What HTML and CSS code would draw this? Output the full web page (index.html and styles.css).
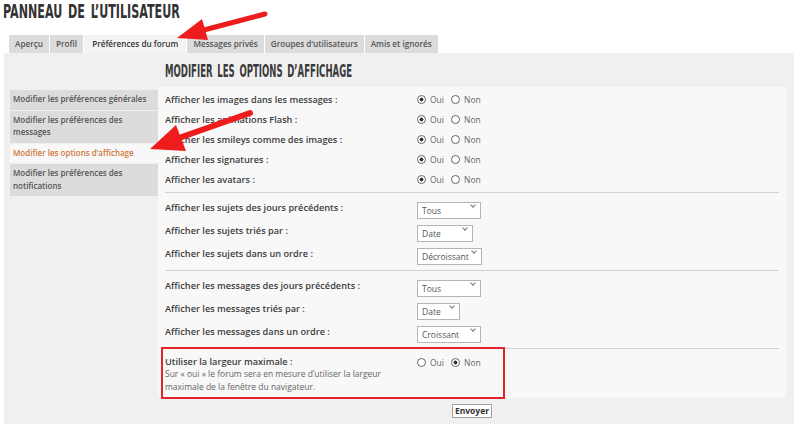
FILE: index.html
```html
<!DOCTYPE html>
<html lang="fr">
<head>
    <meta charset="utf-8">
    <title>Panneau de l'utilisateur</title>
    <link rel="stylesheet" href="styles.css">
</head>
<body>
    <h1 class="page-title"><span>PANNEAU DE L’UTILISATEUR</span></h1>

    <ul class="tabs">
        <li class="tab">Aperçu</li>
        <li class="tab">Profil</li>
        <li class="tab active">Préférences du forum</li>
        <li class="tab">Messages privés</li>
        <li class="tab">Groupes d’utilisateurs</li>
        <li class="tab">Amis et ignorés</li>
    </ul>

    <div class="panel">
        <h2 class="panel-title"><span>MODIFIER LES OPTIONS D’AFFICHAGE</span></h2>

        <ul class="side-menu">
            <li>Modifier les préférences générales</li>
            <li>Modifier les préférences des messages</li>
            <li class="current">Modifier les options d’affichage</li>
            <li>Modifier les préférences des notifications</li>
        </ul>

        <form class="content">
            <div class="group group-radios">
                <div class="row">
                    <label>Afficher les images dans les messages :</label>
                    <span class="choices">
                        <input type="radio" name="images" checked><span>Oui</span>
                        <input type="radio" name="images"><span>Non</span>
                    </span>
                </div>
                <div class="row">
                    <label>Afficher les animations Flash :</label>
                    <span class="choices">
                        <input type="radio" name="flash" checked><span>Oui</span>
                        <input type="radio" name="flash"><span>Non</span>
                    </span>
                </div>
                <div class="row">
                    <label>Afficher les smileys comme des images :</label>
                    <span class="choices">
                        <input type="radio" name="smileys" checked><span>Oui</span>
                        <input type="radio" name="smileys"><span>Non</span>
                    </span>
                </div>
                <div class="row">
                    <label>Afficher les signatures :</label>
                    <span class="choices">
                        <input type="radio" name="sigs" checked><span>Oui</span>
                        <input type="radio" name="sigs"><span>Non</span>
                    </span>
                </div>
                <div class="row">
                    <label>Afficher les avatars :</label>
                    <span class="choices">
                        <input type="radio" name="avatars" checked><span>Oui</span>
                        <input type="radio" name="avatars"><span>Non</span>
                    </span>
                </div>
            </div>

            <div class="group group-selects">
                <div class="row">
                    <label>Afficher les sujets des jours précédents :</label>
                    <span class="select w-wide"><select><option>Tous</option></select></span>
                </div>
                <div class="row">
                    <label>Afficher les sujets triés par :</label>
                    <span class="select w-mid"><select><option>Date</option></select></span>
                </div>
                <div class="row">
                    <label>Afficher les sujets dans un ordre :</label>
                    <span class="select w-full"><select><option>Décroissant</option></select></span>
                </div>
            </div>

            <div class="group group-selects">
                <div class="row">
                    <label>Afficher les messages des jours précédents :</label>
                    <span class="select w-wide"><select><option>Tous</option></select></span>
                </div>
                <div class="row">
                    <label>Afficher les messages triés par :</label>
                    <span class="select w-short"><select><option>Date</option></select></span>
                </div>
                <div class="row">
                    <label>Afficher les messages dans un ordre :</label>
                    <span class="select w-wide"><select><option>Croissant</option></select></span>
                </div>
            </div>

            <div class="group group-last">
                <div class="row row-top">
                    <div class="label-block">
                        <label>Utiliser la largeur maximale :</label>
                        <p class="hint">Sur « oui » le forum sera en mesure d’utiliser la largeur maximale de la fenêtre du navigateur.</p>
                    </div>
                    <span class="choices">
                        <input type="radio" name="maxwidth"><span>Oui</span>
                        <input type="radio" name="maxwidth" checked><span>Non</span>
                    </span>
                </div>
                <div class="mark-box"></div>
            </div>
        </form>

        <div class="actions">
            <button type="button" class="btn">Envoyer</button>
        </div>
    </div>

    <!-- annotation arrows drawn over the screenshot -->
    <svg class="arrows" viewBox="0 0 800 429" width="800" height="429">
        <line x1="265" y1="14" x2="200" y2="31" stroke="#ee1c1c" stroke-width="5" stroke-linecap="round" />
        <polygon points="177,38 208,40 202,19" fill="#ee1c1c" />
        <line x1="250" y1="113" x2="176" y2="139" stroke="#ee1c1c" stroke-width="6" stroke-linecap="round" />
        <polygon points="150,149 186,151 176,125" fill="#ee1c1c" />
    </svg>
</body>
</html>
```

FILE: styles.css
```css
* {
    box-sizing: border-box;
}

body {
    margin: 0;
    background-color: #fff;
    font-family: "Open Sans", "DejaVu Sans", sans-serif;
    color: #444;
    position: relative;
}

/* Condensed titles */
.page-title,
.panel-title {
    margin: 0;
    font-family: "DejaVu Sans Condensed", "Liberation Sans Narrow", sans-serif;
    font-weight: bold;
    color: #333;
    white-space: nowrap;
}

.page-title {
    height: 35px;
    padding-left: 3px;
    font-size: 20px;
    line-height: 23px;
}

.page-title span,
.panel-title span {
    display: inline-block;
    transform-origin: left center;
    transform: scaleX(0.62);
    word-spacing: 3px;
}

.panel-title span {
    transform: scaleX(0.56);
}

/* Tabs */
.tabs {
    list-style: none;
    margin: 0;
    padding: 0 0 0 9px;
    display: flex;
    gap: 1px;
    height: 18px;
}

.tab {
    background-color: #dcdcdc;
    padding: 0 6px;
    font-size: 8.2px;
    font-weight: 600;
    line-height: 18px;
    color: #555;
}

.tab.active {
    background-color: #f3f3f3;
    padding: 0 8px;
    color: #333;
}

/* Main panel */
.panel {
    margin: 0 6px 0 4px;
    background-color: #f0f0f0;
    display: grid;
    grid-template-columns: 148px 1fr;
    padding: 0 8px 6px 6px;
}

.panel-title {
    grid-column: 2;
    height: 34px;
    padding-left: 7px;
    font-size: 17px;
    line-height: 36px;
    color: #3a3a3a;
}

/* Left menu */
.side-menu {
    grid-column: 1;
    grid-row: 2;
    list-style: none;
    margin: 3px 0 0;
    padding: 0;
}

.side-menu li {
    background-color: #dcdcdc;
    padding: 3px 3px 4px;
    margin-bottom: 1px;
    font-size: 8px;
    font-weight: 600;
    line-height: 12.5px;
    color: #555;
}

.side-menu li.current {
    background-color: #f8f8f8;
    color: #d2773a;
}

/* Form content */
.content {
    grid-column: 2;
    grid-row: 2;
    background-color: #f8f8f8;
    padding: 0 7px 0 7px;
}

.group {
    border-bottom: 1px solid #cfd0dc;
}

.group-radios {
    padding: 2px 0 3px;
}

.group-radios .row {
    height: 20px;
}

.group-selects {
    padding: 3px 0 5px;
}

.group-selects .row {
    height: 23px;
}

.group-last {
    border-bottom: none;
    position: relative;
    padding: 6px 0 5px;
}

.row {
    display: flex;
    align-items: center;
}

.row-top {
    align-items: flex-start;
}

.row label,
.label-block {
    width: 252px;
    flex-shrink: 0;
}

.row label {
    font-size: 9.2px;
    font-weight: 600;
    color: #3d3d3d;
}

.label-block label {
    display: block;
    line-height: 13px;
}

.hint {
    margin: 0;
    font-size: 8.5px;
    line-height: 12.5px;
    color: #666;
    width: 236px;
}

/* Radios */
.choices {
    display: flex;
    align-items: center;
    font-size: 8.5px;
    color: #666;
}

.row-top .choices {
    margin-top: 2px;
}

.choices input {
    appearance: none;
    -webkit-appearance: none;
    margin: 0 4px 0 0;
    width: 9px;
    height: 9px;
    border: 1px solid #666;
    border-radius: 50%;
    background-color: #fff;
}

.choices input:checked {
    background: radial-gradient(circle, #333 0 1.8px, #fff 2.2px);
}

.choices span {
    margin-right: 7px;
}

/* Selects */
.select {
    position: relative;
    display: inline-block;
}

.select select {
    appearance: none;
    -webkit-appearance: none;
    width: 100%;
    height: 17px;
    border: 1px solid #b5b5b5;
    border-radius: 0;
    background-color: #fff;
    padding: 0 0 0 4px;
    font-family: "Open Sans", sans-serif;
    font-size: 8.5px;
    color: #555;
}

.select::after {
    content: "";
    position: absolute;
    right: 6px;
    top: 6px;
    width: 3px;
    height: 3px;
    border-right: 1px solid #777;
    border-bottom: 1px solid #777;
    transform: rotate(45deg);
    pointer-events: none;
}

.w-wide {
    width: 64px;
}

.w-full {
    width: 65px;
}

.w-mid {
    width: 56px;
}

.w-short {
    width: 43px;
}

/* Red highlight drawn over the last option */
.mark-box {
    position: absolute;
    left: -4px;
    top: -2px;
    width: 344px;
    height: 52px;
    border: 2px solid #e2232a;
}

.actions {
    grid-column: 2;
    display: flex;
    justify-content: center;
    padding-top: 6px;
}

.btn {
    height: 14px;
    padding: 0 2px;
    border: 1px solid #a0a0a0;
    background-color: #fff;
    font-family: "Open Sans", sans-serif;
    font-size: 8.5px;
    font-weight: bold;
    color: #333;
    line-height: 12px;
}

.arrows {
    position: absolute;
    left: 0;
    top: 0;
    pointer-events: none;
}
```
